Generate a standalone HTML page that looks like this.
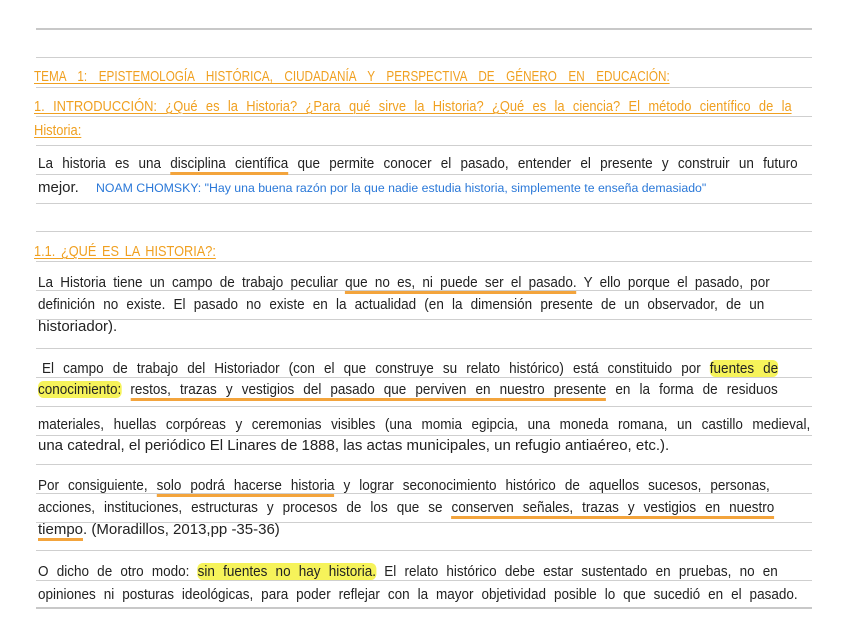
<!DOCTYPE html>
<html><head><meta charset="utf-8"><style>
body{margin:0;width:848px;height:636px;background:#fff;position:relative;overflow:hidden;font-family:"Liberation Sans",sans-serif;color:#222;}
.r{position:absolute;left:36px;width:776px;height:1px;background:#cfcfcf}
.t{position:absolute;font-size:15px;line-height:18px;white-space:nowrap;transform:scaleX(.9);transform-origin:0 0}
.s{transform:none}
.j{text-align:justify;text-align-last:justify;white-space:normal;overflow:hidden;height:20px}
.ou{color:#f0a020;text-decoration:underline;text-decoration-thickness:1px;text-underline-offset:2px}
.u{border-bottom:3px solid #f3a43c}
.h{background:#f6f35a;border-radius:6px}
.b{position:absolute;color:#2a78d8;font-size:12.3px;white-space:nowrap}
</style></head><body>
<div class="r" style="top:28px;height:2px;background:#c8c8c8"></div>
<div class="r" style="top:57px"></div>
<div class="r" style="top:87px"></div>
<div class="r" style="top:116px"></div>
<div class="r" style="top:145px"></div>
<div class="r" style="top:174px"></div>
<div class="r" style="top:203px"></div>
<div class="r" style="top:231px"></div>
<div class="r" style="top:261px"></div>
<div class="r" style="top:290px"></div>
<div class="r" style="top:319px"></div>
<div class="r" style="top:348px"></div>
<div class="r" style="top:377px"></div>
<div class="r" style="top:406px"></div>
<div class="r" style="top:435px"></div>
<div class="r" style="top:464px"></div>
<div class="r" style="top:493px"></div>
<div class="r" style="top:522px"></div>
<div class="r" style="top:550px"></div>
<div class="r" style="top:580px"></div>
<div class="r" style="top:607px;height:2px;background:#c8c8c8"></div>

<div class="t j ou" style="left:34px;top:68px;width:815px;transform:scaleX(.78)">TEMA 1: EPISTEMOLOGÍA HISTÓRICA, CIUDADANÍA Y PERSPECTIVA DE GÉNERO EN EDUCACIÓN:</div>
<div class="t j ou" style="left:34px;top:98px;width:881px;transform:scaleX(.86)">1. INTRODUCCIÓN: ¿Qué es la Historia? ¿Para qué sirve la Historia? ¿Qué es la ciencia? El método científico de la</div>
<div class="t ou" style="left:34px;top:122px;transform:scaleX(.86)">Historia:</div>

<div class="t j" style="left:38px;top:155px;width:844px">La historia es una <span class="u">disciplina científica</span> que permite conocer el pasado, entender el presente y construir un futuro</div>
<div class="t s" style="left:38px;top:179px">mejor.</div>
<div class="b" style="left:96px;top:181px">NOAM CHOMSKY: "Hay una buena razón por la que nadie estudia historia, simplemente te enseña demasiado"</div>

<div class="t j ou" style="left:34px;top:243px;width:214px;transform:scaleX(.85)">1.1. ¿QUÉ ES LA HISTORIA?:</div>

<div class="t j" style="left:38px;top:274px;width:813px">La Historia tiene un campo de trabajo peculiar <span class="u">que no es, ni puede ser el pasado.</span> Y ello porque el pasado, por</div>
<div class="t j" style="left:38px;top:296px;width:807px">definición no existe. El pasado no existe en la actualidad (en la dimensión presente de un observador, de un</div>
<div class="t s" style="left:38px;top:318px">historiador).</div>

<div class="t j" style="left:42px;top:360px;width:818px">El campo de trabajo del Historiador (con el que construye su relato histórico) está constituido por <span class="h">fuentes de</span></div>
<div class="t j" style="left:38px;top:381px;width:822px"><span class="h">conocimiento:</span> <span class="u">restos, trazas y vestigios del pasado que perviven en nuestro presente</span> en la forma de residuos</div>
<div class="t j" style="left:38px;top:416px;width:858px">materiales, huellas corpóreas y ceremonias visibles (una momia egipcia, una moneda romana, un castillo medieval,</div>
<div class="t s" style="left:38px;top:437px">una catedral, el periódico El Linares de 1888, las actas municipales, un refugio antiaéreo, etc.).</div>

<div class="t j" style="left:38px;top:477px;width:813px">Por consiguiente, <span class="u">solo podrá hacerse historia</span> y lograr seconocimiento histórico de aquellos sucesos, personas,</div>
<div class="t j" style="left:38px;top:499px;width:818px">acciones, instituciones, estructuras y procesos de los que se <span class="u">conserven señales, trazas y vestigios en nuestro</span></div>
<div class="t s" style="left:38px;top:521px"><span class="u">tiempo</span>. (Moradillos, 2013,pp -35-36)</div>

<div class="t j" style="left:38px;top:563px;width:822px">O dicho de otro modo: <span class="h">sin fuentes no hay historia.</span> El relato histórico debe estar sustentado en pruebas, no en</div>
<div class="t j" style="left:38px;top:586px;width:844px">opiniones ni posturas ideológicas, para poder reflejar con la mayor objetividad posible lo que sucedió en el pasado.</div>
</body></html>
